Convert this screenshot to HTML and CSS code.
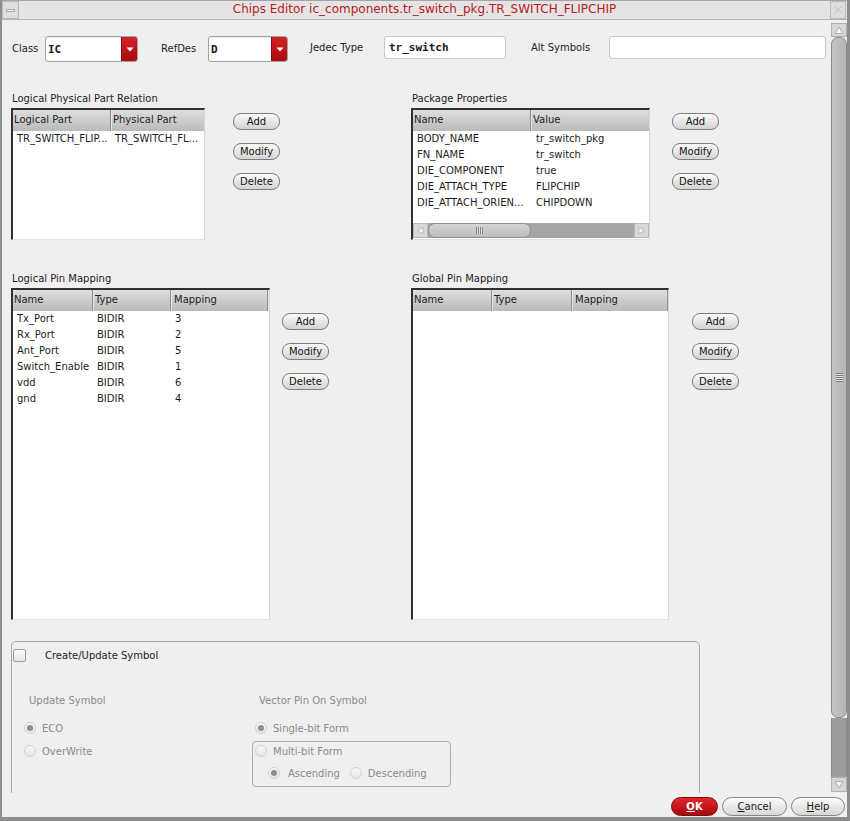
FILE: index.html
```html
<!DOCTYPE html>
<html>
<head>
<meta charset="utf-8">
<title>Chips Editor</title>
<link rel="stylesheet" href="styles.css">
</head>
<body>
<div class="window">
  <div class="titlebar">
    <div class="tb-btn tb-menu">
      <svg width="15" height="16" viewBox="0 0 15 16"><rect x="3.5" y="7.5" width="8" height="2" fill="#f6f6f6" stroke="#a9a9a9"/></svg>
    </div>
    <div class="title">Chips Editor ic_components.tr_switch_pkg.TR_SWITCH_FLIPCHIP</div>
    <div class="tb-btn tb-close">
      <svg width="14" height="16" viewBox="0 0 14 16"><path d="M3.5 4.5 L10.5 11.5 M10.5 4.5 L3.5 11.5" stroke="#c4c4c4" stroke-width="1.3" stroke-dasharray="1.5 1.2" fill="none"/></svg>
    </div>
  </div>

  <div class="main">
    <div class="content">
      <div class="toprow">
        <span class="lbl lbl-class">Class</span>
        <div class="combo combo-class"><span class="mono">IC</span><span class="drop"><svg width="8" height="5" viewBox="0 0 8 5"><path d="M0.5 0.5 H7.5 L4 4.5 Z" fill="#fff"/></svg></span></div>
        <span class="lbl lbl-refdes">RefDes</span>
        <div class="combo combo-refdes"><span class="mono">D</span><span class="drop"><svg width="8" height="5" viewBox="0 0 8 5"><path d="M0.5 0.5 H7.5 L4 4.5 Z" fill="#fff"/></svg></span></div>
        <span class="lbl lbl-jedec">Jedec Type</span>
        <div class="input input-jedec"><span class="mono">tr_switch</span></div>
        <span class="lbl lbl-alt">Alt Symbols</span>
        <div class="input input-alt"></div>
      </div>

      <div class="sec-row row1">
        <div class="section sec-left">
          <div class="sec-label">Logical Physical Part Relation</div>
          <div class="sec-body">
            <div class="tbl tbl-lppr">
              <div class="thead cols-lppr"><div class="th">Logical Part</div><div class="th">Physical Part</div></div>
              <div class="trow cols-lppr"><div class="td">TR_SWITCH_FLIP...</div><div class="td">TR_SWITCH_FL...</div></div>
            </div>
            <div class="btncol btncol-1">
              <div class="btn">Add</div>
              <div class="btn">Modify</div>
              <div class="btn">Delete</div>
            </div>
          </div>
        </div>
        <div class="section sec-right">
          <div class="sec-label">Package Properties</div>
          <div class="sec-body">
            <div class="tbl tbl-pkg">
              <div class="thead cols-pkg"><div class="th">Name</div><div class="th">Value</div></div>
              <div class="trow cols-pkg"><div class="td">BODY_NAME</div><div class="td">tr_switch_pkg</div></div>
              <div class="trow cols-pkg"><div class="td">FN_NAME</div><div class="td">tr_switch</div></div>
              <div class="trow cols-pkg"><div class="td">DIE_COMPONENT</div><div class="td">true</div></div>
              <div class="trow cols-pkg"><div class="td">DIE_ATTACH_TYPE</div><div class="td">FLIPCHIP</div></div>
              <div class="trow cols-pkg"><div class="td">DIE_ATTACH_ORIEN...</div><div class="td">CHIPDOWN</div></div>
              <div class="hscroll">
                <div class="hs-arrow"><svg width="15" height="15" viewBox="0 0 15 15"><path d="M10.5 3.5 L4 7.5 L10.5 11.5 Z" fill="#f4f4f4" stroke="#b4b4b4"/></svg></div>
                <div class="hs-thumb"><span class="grip-v"></span></div>
                <div class="hs-track"></div>
                <div class="hs-arrow"><svg width="15" height="15" viewBox="0 0 15 15"><path d="M4.5 3.5 L11 7.5 L4.5 11.5 Z" fill="#f4f4f4" stroke="#b4b4b4"/></svg></div>
              </div>
            </div>
            <div class="btncol btncol-2">
              <div class="btn">Add</div>
              <div class="btn">Modify</div>
              <div class="btn">Delete</div>
            </div>
          </div>
        </div>
      </div>

      <div class="sec-row row2">
        <div class="section sec-left">
          <div class="sec-label">Logical Pin Mapping</div>
          <div class="sec-body">
            <div class="tbl tbl-pin">
              <div class="thead cols-pin"><div class="th">Name</div><div class="th">Type</div><div class="th">Mapping</div><div class="th"></div></div>
              <div class="trow cols-pin"><div class="td">Tx_Port</div><div class="td">BIDIR</div><div class="td">3</div></div>
              <div class="trow cols-pin"><div class="td">Rx_Port</div><div class="td">BIDIR</div><div class="td">2</div></div>
              <div class="trow cols-pin"><div class="td">Ant_Port</div><div class="td">BIDIR</div><div class="td">5</div></div>
              <div class="trow cols-pin"><div class="td">Switch_Enable</div><div class="td">BIDIR</div><div class="td">1</div></div>
              <div class="trow cols-pin"><div class="td">vdd</div><div class="td">BIDIR</div><div class="td">6</div></div>
              <div class="trow cols-pin"><div class="td">gnd</div><div class="td">BIDIR</div><div class="td">4</div></div>
            </div>
            <div class="btncol btncol-3">
              <div class="btn">Add</div>
              <div class="btn">Modify</div>
              <div class="btn">Delete</div>
            </div>
          </div>
        </div>
        <div class="section sec-right">
          <div class="sec-label">Global Pin Mapping</div>
          <div class="sec-body">
            <div class="tbl tbl-gpin">
              <div class="thead cols-gpin"><div class="th">Name</div><div class="th">Type</div><div class="th">Mapping</div><div class="th"></div></div>
            </div>
            <div class="btncol btncol-4">
              <div class="btn">Add</div>
              <div class="btn">Modify</div>
              <div class="btn">Delete</div>
            </div>
          </div>
        </div>
      </div>

      <div class="group">
        <div class="chkrow"><span class="chk"></span><span class="chk-text">Create/Update Symbol</span></div>
        <div class="gcols">
          <div class="gcol gcol-left">
            <div class="glabel">Update Symbol</div>
            <div class="rrow r-first"><span class="radio on"></span><span class="rtext">ECO</span></div>
            <div class="rrow r-second"><span class="radio"></span><span class="rtext">OverWrite</span></div>
          </div>
          <div class="gcol gcol-right">
            <div class="glabel">Vector Pin On Symbol</div>
            <div class="rrow r-first r-indent"><span class="radio on"></span><span class="rtext">Single-bit Form</span></div>
            <div class="multibox">
              <div class="rrow"><span class="radio"></span><span class="rtext">Multi-bit Form</span></div>
              <div class="rrow r-sub"><span class="radio on"></span><span class="rtext">Ascending</span><span class="radio r-desc"></span><span class="rtext">Descending</span></div>
            </div>
          </div>
        </div>
      </div>
    </div>

    <div class="vscroll">
      <div class="vs-arrow vs-up"><svg width="14" height="14" viewBox="0 0 14 14"><path d="M3 10.5 L7 4 L11 10.5 Z" fill="#f4f4f4" stroke="#b0b0b0"/></svg></div>
      <div class="vs-thumb"><span class="grip-h"></span></div>
      <div class="vs-track"></div>
      <div class="vs-arrow vs-down"><svg width="14" height="15" viewBox="0 0 14 15"><path d="M3 4.5 L11 4.5 L7 11 Z" fill="#f4f4f4" stroke="#b0b0b0"/></svg></div>
    </div>
  </div>

  <div class="footer">
    <div class="fbtn ok"><u>O</u>K</div>
    <div class="fbtn cancel"><u>C</u>ancel</div>
    <div class="fbtn help"><u>H</u>elp</div>
  </div>
</div>
</body>
</html>
```

FILE: styles.css
```css
* { box-sizing: border-box; margin: 0; padding: 0; }

body {
  margin: 0;
  background: #efefef;
  font-family: "DejaVu Sans", "Liberation Sans", sans-serif;
  font-size: 10px;
  color: #1c1c1c;
}

.window {
  width: 850px;
  height: 821px;
  border-left: 2px solid #8d8d8d;
  border-right: 3px solid #8d8d8d;
  border-bottom: 4px solid #8d8d8d;
  background: #efefef;
  display: flex;
  flex-direction: column;
  overflow: hidden;
}

/* ---------- title bar ---------- */
.titlebar {
  height: 20px;
  flex: none;
  display: flex;
  align-items: stretch;
  background: #e4e4e4;
  border-top: 1px solid #a4a4a4;
  border-bottom: 1px solid #b4b4b4;
}
.tb-btn {
  width: 17px;
  display: flex;
  align-items: center;
  justify-content: center;
  background: #dedede;
  border: 1px solid #b8b8b8;
}
.tb-close { width: 16px; margin-right: 1px; }
.title {
  flex: 1;
  text-align: center;
  font-size: 12px;
  line-height: 17px;
  color: #bb1a1e;
}

/* ---------- main area ---------- */
.main {
  height: 773px;
  flex: none;
  display: flex;
}
.content {
  flex: 1;
  overflow: hidden;
  padding-top: 16px;
}

/* top row */
.toprow {
  display: flex;
  align-items: center;
  height: 26px;
  padding-left: 10px;
}
.lbl { flex: none; color: #222; margin-top: -1px; }
.lbl-class { width: 33px; }
.lbl-refdes { width: 47px; margin-left: 23px; }
.lbl-jedec { width: 74px; margin-left: 22px; margin-top: -3px; }
.lbl-alt { width: 78px; margin-left: 25px; margin-top: -3px; }

.mono {
  font-family: "DejaVu Sans Mono", "Liberation Mono", monospace;
  font-size: 11px;
  font-weight: bold;
  color: #1a1a1a;
}
.combo {
  height: 26px;
  display: flex;
  align-items: center;
  background: #fff;
  border: 1px solid #a2a2a2;
  border-radius: 3px;
  box-shadow: inset 0 1px 1px rgba(0,0,0,0.08);
  padding-left: 2px;
  overflow: hidden;
}
.combo .mono { flex: 1; }
.combo-class { width: 93px; }
.combo-refdes { width: 80px; }
.drop {
  width: 16px;
  align-self: stretch;
  display: flex;
  align-items: center;
  justify-content: center;
  background: linear-gradient(#d42226, #a80a0e);
  border-left: 1px solid #8a0d10;
}
.input {
  align-self: flex-start;
  height: 23px;
  background: #fff;
  border: 1px solid #c6c6c6;
  border-radius: 3px;
  padding-left: 4px;
  display: flex;
  align-items: center;
}
.input-jedec { width: 122px; }
.input-alt { width: 217px; }

/* sections */
.sec-row {
  display: flex;
  margin-left: 9px;
}
.row1 { margin-top: 31px; }
.row2 { margin-top: 33px; }
.sec-left { width: 400px; flex: none; }
.sec-label {
  height: 12px;
  line-height: 12px;
  padding-left: 1px;
  margin-bottom: 3px;
  color: #222;
}
.sec-body { display: flex; align-items: flex-start; }

.tbl {
  background: #fff;
  border-top: 2px solid #303030;
  border-left: 2px solid #303030;
  border-right: 1px solid #d6d6d6;
  border-bottom: 1px solid #e2e2e2;
  overflow: hidden;
  display: flex;
  flex-direction: column;
}
.tbl-lppr { width: 194px; height: 132px; }
.tbl-pkg { width: 239px; height: 132px; }
.tbl-pin { width: 259px; height: 332px; }
.tbl-gpin { width: 258px; height: 332px; }

.thead {
  display: grid;
  height: 21px;
  flex: none;
  background: linear-gradient(#dedede, #bababa);
}
.th {
  line-height: 20px;
  padding-left: 2px;
  border-right: 1px solid #8e8e8e;
  box-shadow: inset 1px 0 0 #e6e6e6;
  color: #1e1e1e;
  white-space: nowrap;
  overflow: hidden;
}
.th:first-child { box-shadow: none; padding-left: 1px; }
.trow {
  display: grid;
  height: 16px;
  flex: none;
}
.td {
  line-height: 16px;
  padding-left: 4px;
  white-space: nowrap;
  overflow: hidden;
}
.cols-lppr { grid-template-columns: 98px 1fr; }
.cols-lppr .th:last-child { border-right: none; }
.cols-pkg { grid-template-columns: 118px 1fr; }
.cols-pkg .th:last-child { border-right: none; }
.cols-pkg .td:last-child { padding-left: 5px; }
.cols-pin { grid-template-columns: 80px 78px 97px 1fr; }
.cols-gpin { grid-template-columns: 79px 80px 96px 1fr; }
.cols-pin .th:last-child, .cols-gpin .th:last-child { border-right: none; }
.cols-pin .th:nth-child(3), .cols-gpin .th:nth-child(3) { padding-left: 3px; }

/* horizontal scrollbar in package table */
.hscroll {
  margin-top: auto;
  margin-bottom: 1px;
  height: 15px;
  display: flex;
  background: #a6a6a6;
}
.hs-arrow {
  width: 15px;
  height: 15px;
  background: #d8d8d8;
  border: 1px solid #b8b8b8;
  display: flex;
  align-items: center;
  justify-content: center;
}
.hs-arrow svg { display: block; }
.hs-thumb {
  width: 103px;
  background: linear-gradient(#d4d4d4, #bcbcbc);
  border: 1px solid #8e8e8e;
  border-radius: 7px;
  display: flex;
  align-items: center;
  justify-content: center;
}
.hs-track { flex: 1; }
.grip-v {
  width: 7px;
  height: 7px;
  background: repeating-linear-gradient(90deg, #7f7f7f 0 1px, #e4e4e4 1px 2px);
}

/* buttons */
.btncol {
  display: flex;
  flex-direction: column;
  gap: 13px;
  flex: none;
}
.btncol-1 { margin-left: 28px; padding-top: 5px; }
.btncol-2 { margin-left: 22px; padding-top: 5px; }
.btncol-3 { margin-left: 12px; padding-top: 25px; }
.btncol-4 { margin-left: 23px; padding-top: 25px; }
.btn {
  width: 47px;
  height: 17px;
  border: 1px solid #7c7c7c;
  border-radius: 8px;
  background: linear-gradient(#fbfbfb, #d3d3d3);
  text-align: center;
  line-height: 15px;
  color: #151515;
}

/* group box */
.group {
  margin-top: 21px;
  margin-left: 9px;
  width: 689px;
  height: 200px;
  border: 1px solid #a8a8a8;
  border-radius: 5px 5px 0 0;
  padding: 7px 0 0 1px;
}
.chkrow {
  display: flex;
  align-items: center;
  height: 13px;
}
.chk {
  width: 13px;
  height: 13px;
  border: 1px solid #9c9c9c;
  border-radius: 2px;
  background: linear-gradient(#ffffff, #e4e4e4);
}
.chk-text { margin-left: 19px; color: #222; }

.gcols {
  display: flex;
  margin-top: 33px;
}
.gcol-left { width: 239px; padding-left: 11px; flex: none; }
.gcol-right { flex: none; }
.glabel {
  height: 12px;
  line-height: 12px;
  color: #8a8a8a;
  padding-left: 5px;
}
.gcol-right .glabel { padding-left: 7px; }
.rrow {
  display: flex;
  align-items: center;
  height: 16px;
  color: #8a8a8a;
}
.r-first { margin-top: 13px; }
.r-second { margin-top: 7px; }
.r-indent { padding-left: 3px; }
.radio {
  width: 12px;
  height: 12px;
  border-radius: 50%;
  border: 1px solid #d2d2d2;
  background: linear-gradient(#f8f8f8, #e6e6e6);
  display: flex;
  align-items: center;
  justify-content: center;
  flex: none;
}
.radio.on::after {
  content: "";
  width: 6px;
  height: 6px;
  border-radius: 50%;
  background: #8c8c8c;
}
.rtext { margin-left: 6px; }
.multibox {
  margin-top: 5px;
  width: 199px;
  border: 1px solid #acacac;
  border-radius: 4px;
  padding: 1px 0 5px 2px;
}
.r-sub { margin-top: 6px; padding-left: 13px; }
.r-sub .rtext:nth-child(2) { margin-left: 8px; }
.r-desc { margin-left: 10px; }

/* vertical scrollbar */
.vscroll {
  width: 16px;
  flex: none;
  display: flex;
  flex-direction: column;
  padding-top: 3px;
  padding-bottom: 1px;
}
.vs-arrow {
  background: #d6d6d6;
  border: 1px solid #b0b0b0;
  display: flex;
  align-items: center;
  justify-content: center;
}
.vs-up { height: 14px; }
.vs-down { height: 15px; }
.vs-thumb {
  height: 681px;
  background: linear-gradient(90deg, #c4c4c4, #b6b6b6);
  border: 1px solid #8a8a8a;
  border-radius: 7px;
  display: flex;
  align-items: center;
  justify-content: center;
}
.grip-h {
  width: 7px;
  height: 9px;
  background: repeating-linear-gradient(180deg, #7e7e7e 0 1px, #e2e2e2 1px 2px);
}
.vs-track {
  flex: 1;
  background: #9d9d9d;
  border-left: 1px solid #8a8a8a;
  border-right: 1px solid #8a8a8a;
}

/* footer */
.footer {
  flex: 1;
  display: flex;
  justify-content: flex-end;
  align-items: flex-start;
  gap: 4px;
  padding-top: 4px;
  padding-right: 2px;
}
.fbtn {
  height: 19px;
  border-radius: 10px;
  text-align: center;
  line-height: 17px;
  font-size: 10px;
}
.fbtn u { text-decoration: underline; text-underline-offset: 1px; }
.ok {
  width: 47px;
  background: linear-gradient(#e4262a, #a60a0c);
  border: 1px solid #7e0a0c;
  color: #fff;
  font-weight: bold;
}
.cancel, .help {
  border: 1px solid #858585;
  background: linear-gradient(#fdfdfd, #d6d6d6);
  color: #1a1a1a;
}
.cancel { width: 65px; }
.help { width: 54px; }
```
